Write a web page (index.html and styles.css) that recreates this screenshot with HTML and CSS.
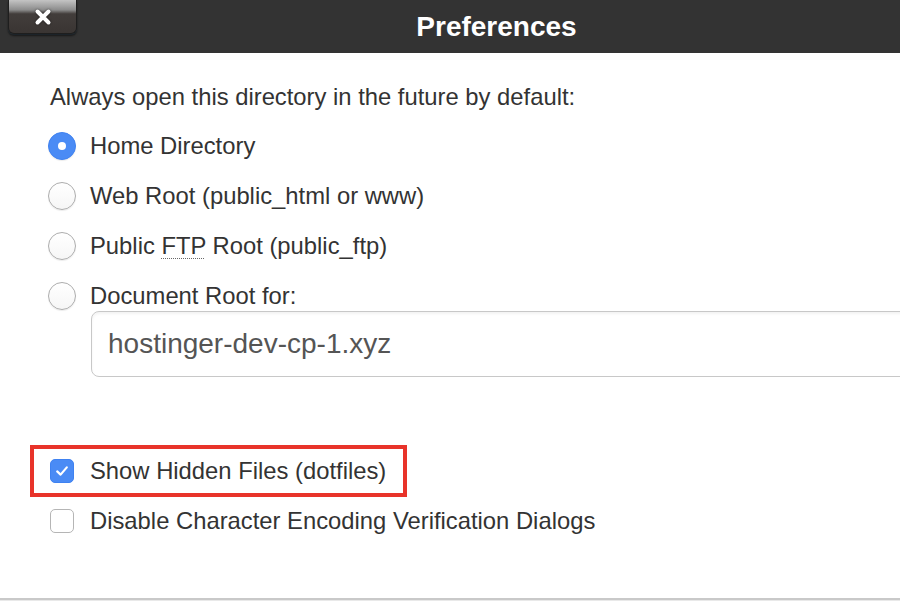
FILE: index.html
```html
<!DOCTYPE html>
<html lang="en">
<head>
  <meta charset="UTF-8" />
  <title>Preferences</title>
  <link rel="stylesheet" href="styles.css">
</head>
<body>
  <div class="dialog">
    <div class="dialog-header">
      <button class="close-btn" aria-label="Close">
        <svg width="18" height="18" viewBox="0 0 18 18">
          <path d="M3.5 3.5 L14.5 14.5 M14.5 3.5 L3.5 14.5" stroke="#fff" stroke-width="4" stroke-linecap="round" fill="none"/>
        </svg>
      </button>
      <h1 class="dialog-title">Preferences</h1>
    </div>

    <div class="dialog-body">
      <div class="lead">Always open this directory in the future by default:</div>

      <div class="option">
        <span class="radio checked"></span>
        <span>Home Directory</span>
      </div>
      <div class="option">
        <span class="radio"></span>
        <span>Web Root (public_html or www)</span>
      </div>
      <div class="option">
        <span class="radio"></span>
        <span>Public <abbr title="File Transfer Protocol">FTP</abbr> Root (public_ftp)</span>
      </div>
      <div class="option-group">
        <div class="option">
          <span class="radio"></span>
          <span>Document Root for:</span>
        </div>
        <div class="domain-input">hostinger-dev-cp-1.xyz</div>
      </div>

      <div class="checks">
        <div class="option highlight">
          <span class="checkbox checked">
            <svg width="16" height="16" viewBox="0 0 16 16">
              <path d="M3.2 8.4 L6.6 11.6 L12.8 4.4" stroke="#fff" stroke-width="2.2" stroke-linecap="round" stroke-linejoin="round" fill="none"/>
            </svg>
          </span>
          <span>Show Hidden Files (dotfiles)</span>
        </div>
        <div class="option plain">
          <span class="checkbox"></span>
          <span>Disable Character Encoding Verification Dialogs</span>
        </div>
      </div>
    </div>
  </div>
</body>
</html>
```

FILE: styles.css
```css
body {
  margin: 0;
  height: 601px;
  overflow: hidden;
  background: #e9e9e9;
  font-family: 'Liberation Sans', Arial, Helvetica, sans-serif;
  color: #333;
}

.dialog {
  height: 598px;
  background: #fff;
  border-bottom: 2px solid #c9c9c9;
  overflow: hidden;
}

.dialog-header {
  height: 53px;
  background: #333;
  display: flex;
  align-items: flex-start;
}

.close-btn {
  width: 69px;
  height: 34px;
  margin-left: 8px;
  padding: 0;
  border: 1px solid #1e1e1e;
  border-top: none;
  border-radius: 0 0 6px 6px;
  background: linear-gradient(180deg, #c4c4c4 0%, #8c8c8c 30%, #423d3b 42%, #3a3533 100%);
  box-shadow: 0 2px 2px rgba(0, 0, 0, 0.55), 0 1px 0 rgba(70, 110, 140, 0.4);
  display: flex;
  justify-content: center;
  align-items: center;
  cursor: pointer;
}

.close-btn svg {
  filter: drop-shadow(0 0 1px rgba(0, 0, 0, 0.6));
}

.dialog-title {
  flex: 1;
  margin: 0;
  padding-left: 16px;
  text-align: center;
  color: #fff;
  font-size: 28px;
  font-weight: bold;
  line-height: 53px;
}

.dialog-body {
  padding: 20px 0 0 0;
  font-size: 23.8px;
}

.lead {
  padding-left: 50px;
  line-height: 48px;
}

.option {
  display: flex;
  align-items: center;
  gap: 14px;
  height: 50px;
  padding-left: 48px;
}

.option-group .option {
  height: 40px;
  align-items: flex-start;
}

.option-group .option .radio {
  margin-top: 11px;
}

.option-group .option span:last-child {
  line-height: 50px;
}

.radio {
  width: 26px;
  height: 26px;
  border-radius: 50%;
  border: 1px solid #adadad;
  background: linear-gradient(180deg, #fff 0%, #f6f6f6 100%);
  box-shadow: 0 1px 1px rgba(0, 0, 0, 0.08);
  flex-shrink: 0;
  display: flex;
  justify-content: center;
  align-items: center;
}

.radio.checked {
  border-color: #3f82f1;
  background: #4a8bf5;
}

.radio.checked::after {
  content: "";
  width: 8px;
  height: 8px;
  border-radius: 50%;
  background: #fff;
}

abbr {
  text-decoration: underline dotted #666;
  text-decoration-thickness: 1px;
  text-underline-offset: 4px;
}

.domain-input {
  margin-left: 91px;
  width: 860px;
  height: 64px;
  border: 1.5px solid #c8c8c8;
  border-radius: 8px;
  box-shadow: inset 0 2px 3px rgba(0, 0, 0, 0.05);
  padding-left: 16px;
  font-size: 28px;
  line-height: 64px;
  color: #555;
}

.checks {
  margin-top: 68px;
  display: flex;
  flex-direction: column;
  align-items: flex-start;
}

.checkbox {
  width: 22px;
  height: 22px;
  border-radius: 5px;
  border: 1px solid #b5b5b5;
  background: #fff;
  flex-shrink: 0;
  display: flex;
  justify-content: center;
  align-items: center;
}

.checkbox.checked {
  border-color: #3f82f1;
  background: #4a8bf5;
}

.option.highlight {
  height: 44px;
  margin-left: 30px;
  padding: 0 17px 0 16px;
  border: 4px solid #e8332a;
  gap: 16px;
}

.option.plain {
  height: 48px;
  padding-left: 50px;
  gap: 16px;
}
```
